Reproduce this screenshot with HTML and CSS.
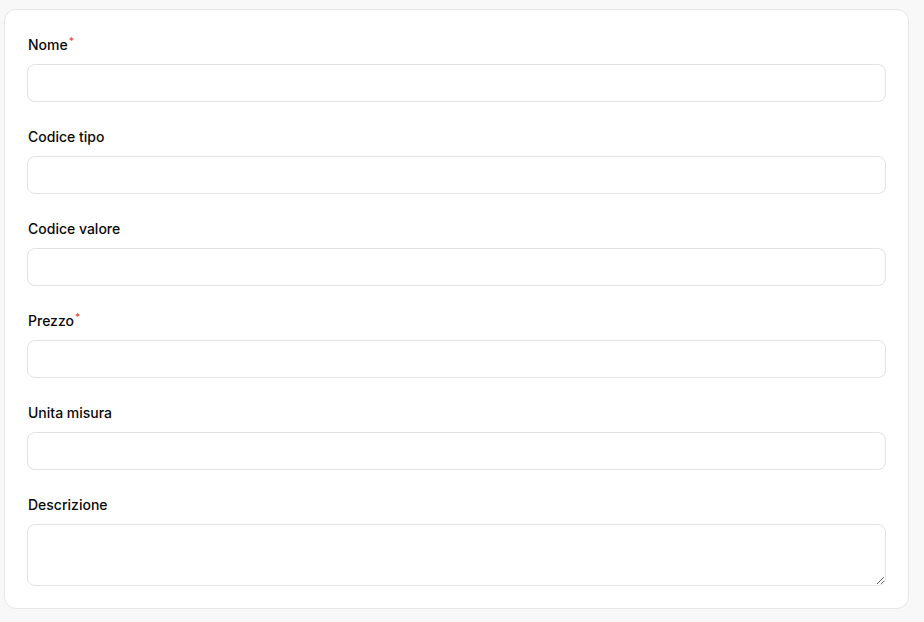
FILE: index.html
```html
<!DOCTYPE html>
<html lang="it">
<head>
<meta charset="utf-8">
<title>Form</title>
<link rel="stylesheet" href="styles.css">
</head>
<body>
<div class="card">
  <div class="field">
    <label class="label">Nome<span class="req">*</span></label>
    <input class="input" type="text">
  </div>
  <div class="field">
    <label class="label">Codice tipo</label>
    <input class="input" type="text">
  </div>
  <div class="field">
    <label class="label">Codice valore</label>
    <input class="input" type="text">
  </div>
  <div class="field">
    <label class="label">Prezzo<span class="req">*</span></label>
    <input class="input" type="text">
  </div>
  <div class="field">
    <label class="label">Unita misura</label>
    <input class="input" type="text">
  </div>
  <div class="field">
    <label class="label">Descrizione</label>
    <textarea class="input textarea"></textarea>
  </div>
</div>
</body>
</html>
```
FILE: styles.css
```css
html, body {
  margin: 0;
  padding: 0;
  background: #f8f8f8;
  font-family: Inter, "Noto Sans", sans-serif;
}
.card {
  box-sizing: border-box;
  margin: 9px 15px 0 4px;
  width: 905px;
  background: #ffffff;
  border: 1px solid #e6e6e6;
  border-radius: 12px;
  padding: 26px 22px 22px 22px;
  display: flex;
  flex-direction: column;
  gap: 26px;
}
.field {
  display: flex;
  flex-direction: column;
  gap: 10px;
}
.label {
  font-size: 14px;
  line-height: 18px;
  font-weight: 500;
  color: #0a0a0a;
  padding-left: 1px;
}
.req {
  color: #ef4444;
  font-size: 10px;
  vertical-align: top;
  position: relative;
  top: -4px;
  margin-left: 1px;
}
.input {
  box-sizing: border-box;
  display: block;
  width: 100%;
  height: 38px;
  margin: 0;
  border: 1px solid #e2e2e2;
  border-radius: 8px;
  background: #ffffff;
  font-family: Inter, sans-serif;
  font-size: 14px;
  padding: 8px 12px;
  outline: none;
}
.textarea {
  height: 62px;
  resize: vertical;
}
```
